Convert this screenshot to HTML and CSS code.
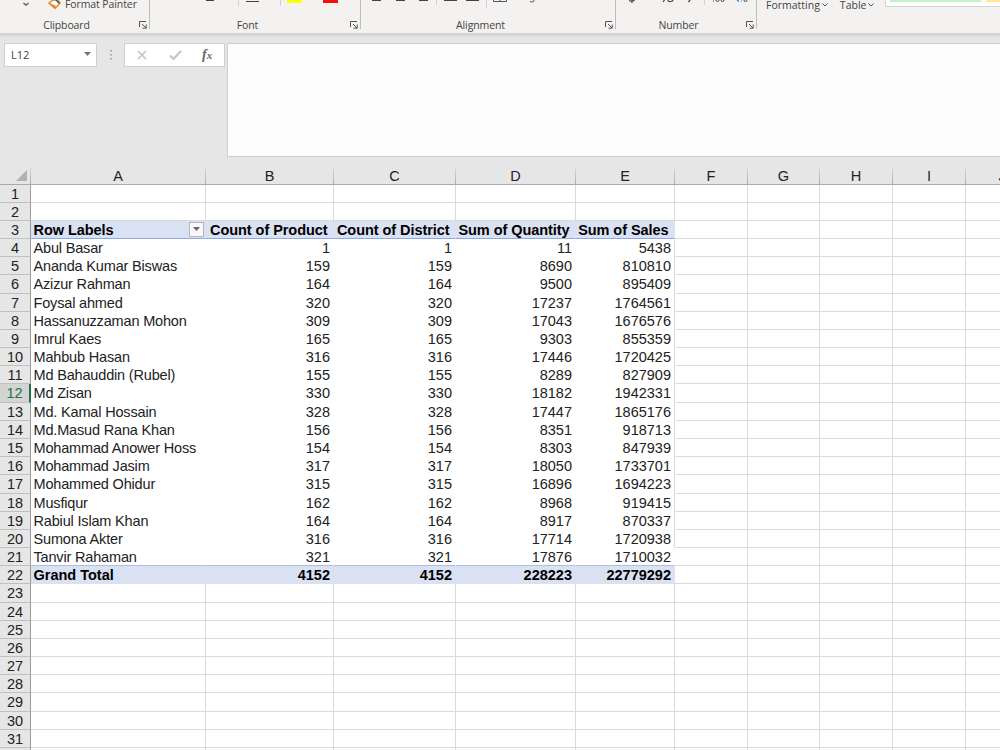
FILE: index.html
```
<!DOCTYPE html>
<html lang="en">
<head>
    <meta charset="UTF-8">
    <title>Sales Pivot</title>
    <link rel="stylesheet" href="styles.css">
</head>
<body>
    <div class="ribbon">
        <div class="group clipboard">
            <div class="tools">
                <svg width="62" height="14" viewBox="0 0 62 14">
                    <path d="M23.5 3l2.5 2.2L28.5 3" fill="none" stroke="#555" stroke-width="1.3"/>
                    <path d="M49 3l4-3h5l2 3-5 5.500z" fill="#fff" stroke="#e08a35" stroke-width="1.5"/>
                    <path d="M50 3l6 3-1.500 2.500z" fill="#e8842a"/>
                    <path d="M55-1l4.500 4.500" stroke="#555" stroke-width="1.500"/>
                </svg>
                <span class="tool painter">Format Painter</span>
            </div>
            <div class="label">Clipboard</div>
            <svg class="launcher" viewBox="0 0 8 8"><path d="M.5 6V.5H7M3 3l4 4M7.200 3.500v3.700H3.500" /></svg>
        </div>
        <div class="group font">
            <div class="tools">
                <svg width="210" height="14" viewBox="0 0 210 14">
                    <path d="M56 .5h8M96 1.500h13" stroke="#444"/>
                    <path d="M88.500 0v6M130.500 0v6" stroke="#d0d0d0"/>
                    <path d="M137 0h15v3h-15z" fill="#ffff12"/>
                    <path d="M173 0h15v3h-15z" fill="#ee1111"/>
                </svg>
            </div>
            <div class="label">Font</div>
            <svg class="launcher" viewBox="0 0 8 8"><path d="M.5 6V.5H7M3 3l4 4M7.200 3.500v3.700H3.500" /></svg>
        </div>
        <div class="group alignment">
            <div class="tools">
                <svg width="254" height="14" viewBox="0 0 254 14">
                    <path d="M11 .5h9M35 .5h9M58 .5h9M83 .5h13M105 .5h13" stroke="#444"/>
                    <path d="M75.500 0v5M125.500 0v8" stroke="#d0d0d0"/>
                    <path d="M132.500 0v1.500h13V0M139 0v1.500" fill="none" stroke="#4a5a60"/>
                    <path d="M169 1.500q4 1.500 4-1.500" fill="none" stroke="#555"/>
                </svg>
            </div>
            <div class="label">Alignment</div>
            <svg class="launcher" viewBox="0 0 8 8"><path d="M.5 6V.5H7M3 3l4 4M7.200 3.500v3.700H3.500" /></svg>
        </div>
        <div class="group number">
            <div class="tools">
                <svg width="140" height="14" viewBox="0 0 140 14">
                    <path d="M13 .5q3 1.500 5.500-.5M16 0v3" fill="none" stroke="#444" stroke-width="1.200"/>
                    <path d="M47 2l1.500-2M52 0q0 1.800 2.500 1.500T57 0" fill="none" stroke="#444" stroke-width="1.200"/>
                    <path d="M74 0l-1.500 2" stroke="#444" stroke-width="1.300"/>
                    <path d="M88.500 0v5" stroke="#d0d0d0"/>
                    <path d="M97 1h1M100 0q0 1.500 1.500 1.500T103 0M105 0q0 1.500 1.500 1.500T108 0" fill="none" stroke="#444"/>
                    <path d="M121 0l2 1.500M125 1h1" stroke="#2a7fd0" stroke-width="1.200"/>
                    <path d="M128 0q0 1.500 1.500 1.500T131 0" fill="none" stroke="#444"/>
                </svg>
            </div>
            <div class="label">Number</div>
            <svg class="launcher" viewBox="0 0 8 8"><path d="M.5 6V.5H7M3 3l4 4M7.200 3.500v3.700H3.500" /></svg>
        </div>
        <div class="group styles">
            <div class="tools">
                <span class="tool formatting">Formatting</span>
                <svg class="chevron" viewBox="0 0 6 4"><path d="M.5.5L3 3 5.500.5"/></svg>
                <span class="tool table">Table</span>
                <svg class="chevron" viewBox="0 0 6 4"><path d="M.5.5L3 3 5.500.5"/></svg>
                <div class="gallery"><i class="good"></i><i class="neutral"></i></div>
            </div>
        </div>
    </div>

    <div class="formula-bar">
        <div class="name-box">
            <span>L12</span>
            <svg width="7" height="4" viewBox="0 0 7 4"><path d="M0 0h7L3.500 4z" fill="#777"/></svg>
        </div>
        <svg class="grip" width="2" height="10" viewBox="0 0 2 10"><path d="M0 0h2v1.500H0zM0 4h2v1.500H0zM0 8h2v1.500H0z" fill="#a8a8a8"/></svg>
        <div class="actions">
            <svg width="10" height="10" viewBox="0 0 10 10"><path d="M1 1l8 8M9 1L1 9" stroke="#c4c4c4" stroke-width="1.700"/></svg>
            <svg width="13" height="10" viewBox="0 0 13 10"><path d="M1 5.500L4.500 9 12 1" fill="none" stroke="#c4c4c4" stroke-width="2"/></svg>
            <span class="fx">f<small>x</small></span>
        </div>
        <div class="formula-input"></div>
    </div>

    <div class="sheet" id="sheet"></div>

    <script src="script.js"></script>
</body>
</html>
```
FILE: styles.css
```
* { margin: 0; padding: 0; box-sizing: border-box; }
body {
    width: 1000px;
    height: 750px;
    overflow: hidden;
    background: #e6e6e6;
    font-family: "Liberation Sans", Arial, sans-serif;
    color: #222;
}
svg { display: block; flex: none; }

/* Ribbon */
.ribbon {
    display: flex;
    height: 33px;
    background: #f3f2f1;
    font-family: "Open Sans", "Noto Sans", sans-serif;
    font-size: 10.5px;
    color: #444;
}
.group {
    position: relative;
    height: 29px;
    border-right: 1px solid #bdbdbd;
}
.clipboard { width: 150px; }
.font { width: 211px; }
.alignment { width: 255px; }
.number { width: 141px; }
.styles { flex: 1; border: none; }
.tools {
    display: flex;
    height: 18px;
}
.label {
    text-align: center;
    line-height: 15px;
    padding-right: 16px;
    letter-spacing: -0.1px;
}
.font .label, .alignment .label, .number .label { padding-right: 15px; }
.launcher {
    position: absolute;
    right: 2px;
    bottom: 0;
    width: 8px;
    height: 8px;
}
.launcher path { fill: none; stroke: #555; }
.tool { line-height: 14px; white-space: nowrap; }
.painter { margin: -3px 0 0 3px; font-size: 10.5px; letter-spacing: -0.1px; }
.formatting { margin: -2px 0 0 9px; font-size: 10.5px; }
.table { margin: -2px 0 0 12px; font-size: 10.5px; }
.chevron { width: 6px; height: 4px; margin: 3px 0 0 2px; }
.chevron path { fill: none; stroke: #555; }
.gallery {
    display: flex;
    gap: 5px;
    flex: 1;
    height: 7px;
    margin-left: 11px;
    padding-left: 4px;
    background: #fff;
    border: solid #d2d2d2;
    border-width: 0 0 1px 1px;
}
.gallery i { height: 2px; }
.good { width: 91px; background: #c6efce; }
.neutral { flex: 1; background: #ffe699; }

/* Formula bar */
.formula-bar {
    display: flex;
    align-items: flex-start;
    height: 134px;
    padding-top: 10px;
    background: linear-gradient(#cfcfcf, #e6e6e6 5px);
}
.name-box {
    display: flex;
    align-items: center;
    justify-content: space-between;
    width: 93px;
    height: 24px;
    margin-left: 4px;
    padding: 0 5px 2px 6px;
    border: 1px solid #cfcfcf;
    background: #fff;
    font: 11px "Open Sans", sans-serif;
    color: #444;
}
.grip { margin: 7px 12px 0 13px; }
.actions {
    display: flex;
    align-items: center;
    width: 101px;
    height: 24px;
    padding: 0 0 1px 12px;
    gap: 22px;
    border: 1px solid #cfcfcf;
    background: #fff;
}
.fx {
    font: italic bold 14px "Liberation Serif", serif;
    color: #666;
    margin-left: -2px;
}
.fx small { font-size: 11px; }
.formula-input {
    flex: 1;
    height: 114px;
    margin-left: 2px;
    border: 1px solid #cfcfcf;
    border-right: none;
    background: #fdfdfd;
}

/* Sheet */
.row {
    display: grid;
    grid-template-columns: 31px 175px 128px 122px 120px 99px 73px 72px 73px 73px 73px;
    grid-template-rows: 100%;
    height: 18.18px;
    font-size: 14.5px;
    line-height: 18.8px;
}
.head, .cell {
    min-height: 0;
    border-right: 1px solid #dadada;
    border-bottom: 1px solid #dadada;
    white-space: nowrap;
}
.cell { background: #fff; }
.columns { height: 17.6px; line-height: 18px; }
.columns .head {
    text-align: center;
    border-bottom-color: #a8a8a8;
    border-image: linear-gradient(#dcdcdc, #a8a8a8) 1;
}
.corner {
    display: flex;
    justify-content: flex-end;
    padding: 3px 3px 0 0;
}
.num {
    text-align: center;
    background: #e6e6e6;
    border-color: #c0c0c0;
    border-right-color: #999;
}
.num.active {
    background: #d4d4d4;
    color: #217346;
    border-right: 2px solid #217346;
}
.data { text-align: right; padding-right: 3px; border-color: #fff; }
.data.name {
    text-align: left;
    padding-left: 2.5px;
    letter-spacing: -0.17px;
}
.data.edge { border-right-color: #dadada; }
.strong .data {
    background: #d9e1f2;
    border-color: #d9e1f2;
    color: #000;
    font-weight: bold;
    letter-spacing: 0;
}
.titles .data { border-bottom-color: #8ea9db; padding-right: 5.5px; letter-spacing: -0.06px; }
.titles .name {
    display: flex;
    justify-content: space-between;
    padding-right: 1px;
}
.before-total .data { border-bottom-color: #a9bfe6; }
.before-total .data.edge { border-right-color: #fff; }
.filter {
    display: flex;
    align-items: center;
    justify-content: center;
    width: 15px;
    height: 15px;
    margin-top: 1px;
    border: 1px solid #b5b5b5;
    background: #f8f8f8;
}
```
FILE: script.js
```
const pivot = [
    ['Row Labels', 'Count of Product', 'Count of District', 'Sum of Quantity', 'Sum of Sales'],
    ['Abul Basar', 1, 1, 11, 5438],
    ['Ananda Kumar Biswas', 159, 159, 8690, 810810],
    ['Azizur Rahman', 164, 164, 9500, 895409],
    ['Foysal ahmed', 320, 320, 17237, 1764561],
    ['Hassanuzzaman Mohon', 309, 309, 17043, 1676576],
    ['Imrul Kaes', 165, 165, 9303, 855359],
    ['Mahbub Hasan', 316, 316, 17446, 1720425],
    ['Md Bahauddin (Rubel)', 155, 155, 8289, 827909],
    ['Md Zisan', 330, 330, 18182, 1942331],
    ['Md. Kamal Hossain', 328, 328, 17447, 1865176],
    ['Md.Masud Rana Khan', 156, 156, 8351, 918713],
    ['Mohammad Anower Hoss', 154, 154, 8303, 847939],
    ['Mohammad Jasim', 317, 317, 18050, 1733701],
    ['Mohammed Ohidur', 315, 315, 16896, 1694223],
    ['Musfiqur', 162, 162, 8968, 919415],
    ['Rabiul Islam Khan', 164, 164, 8917, 870337],
    ['Sumona Akter', 316, 316, 17714, 1720938],
    ['Tanvir Rahaman', 321, 321, 17876, 1710032],
    ['Grand Total', 4152, 4152, 228223, 22779292]
];
const firstRow = 3;
const lastRow = firstRow + pivot.length - 1;
const activeRow = 12;
const columns = 'ABCDEFGHIJ'.split('');

const filter = '<span class="filter"><svg width="7" height="4" viewBox="0 0 7 4"><path d="M0 0h7L3.500 4z" fill="#666"/></svg></span>';

let html = '<div class="row columns"><div class="head corner"><svg width="11" height="11" viewBox="0 0 11 11"><path d="M11 0v11H0z" fill="#b1b1b1"/></svg></div>';
html += columns.map(c => `<div class="head">${c}</div>`).join('') + '</div>';

for (let r = 1; r <= 32; r++) {
    const values = pivot[r - firstRow];
    let rowClass = 'row';
    if (r === firstRow) rowClass += ' strong titles';
    if (r === lastRow) rowClass += ' strong';
    if (r === lastRow - 1) rowClass += ' before-total';

    html += `<div class="${rowClass}"><div class="head num${r === activeRow ? ' active' : ''}">${r}</div>`;
    columns.forEach((c, i) => {
        if (values && i < values.length) {
            const extra = (i === 0 ? ' name' : '') + (i === 4 ? ' edge' : '');
            const text = r === firstRow && i === 0 ? `<span>${values[i]}</span>${filter}` : values[i];
            html += `<div class="cell data${extra}">${text}</div>`;
        } else {
            html += '<div class="cell"></div>';
        }
    });
    html += '</div>';
}

document.getElementById('sheet').innerHTML = html;
```
